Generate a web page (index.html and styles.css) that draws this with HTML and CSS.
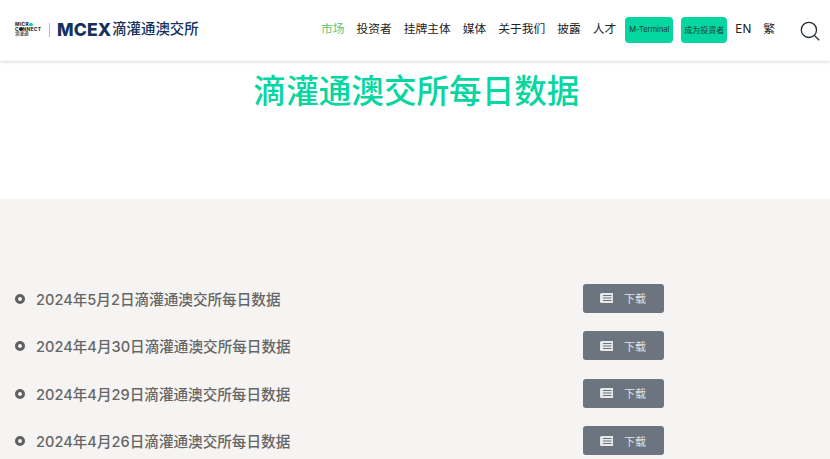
FILE: index.html
```html
<!DOCTYPE html>
<html lang="zh-CN">
<head>
<meta charset="utf-8">
<title>滴灌通澳交所每日数据</title>
<link rel="stylesheet" href="styles.css">
</head>
<body>
<header class="header">
  <a class="logo" href="#">
    <span class="mc">
      <span class="mc-line">MICR<i class="dot"></i></span>
      <span class="mc-line">C<i class="dot dark"></i>NNECT</span>
      <span class="mc-cn">滴灌通</span>
    </span>
    <span class="divider"></span>
    <span class="mcex">MCEX</span>
    <span class="mcex-cn">滴灌通澳交所</span>
  </a>
  <nav class="nav">
    <a class="nav-link active" href="#">市场</a>
    <a class="nav-link" href="#">投资者</a>
    <a class="nav-link" href="#">挂牌主体</a>
    <a class="nav-link" href="#">媒体</a>
    <a class="nav-link" href="#">关于我们</a>
    <a class="nav-link" href="#">披露</a>
    <a class="nav-link" href="#">人才</a>
    <a class="pill pill-a" href="#">M-Terminal</a>
    <a class="pill pill-b" href="#">成为投资者</a>
    <a class="nav-link" href="#">EN</a>
    <a class="nav-link" href="#">繁</a>
  </nav>
  <svg class="search" viewBox="0 0 20 20" width="20" height="20" fill="none" stroke="#222b33" stroke-width="1.3">
    <circle cx="8.9" cy="8.9" r="7.6"/>
    <path d="M14.4 14.4 L19.2 19.2"/>
  </svg>
</header>
<section class="hero">
  <h1 class="title">滴灌通澳交所每日数据</h1>
</section>
<main class="list">
  <div class="row">
    <span class="bullet"></span><span class="name">2024年5月2日滴灌通澳交所每日数据</span>
    <a class="btn" href="#"><svg class="doc" viewBox="0 0 13 10" width="13" height="10"><path class="doc-fill" d="M1.5 0H13V10H1.5Q0 10 0 8.5V1.5Q0 0 1.5 0Z"/><path class="doc-line" d="M3 2.5H11.5M3 5H11.5M3 7.5H11.5"/></svg><span>下载</span></a>
  </div>
  <div class="row">
    <span class="bullet"></span><span class="name">2024年4月30日滴灌通澳交所每日数据</span>
    <a class="btn" href="#"><svg class="doc" viewBox="0 0 13 10" width="13" height="10"><path class="doc-fill" d="M1.5 0H13V10H1.5Q0 10 0 8.5V1.5Q0 0 1.5 0Z"/><path class="doc-line" d="M3 2.5H11.5M3 5H11.5M3 7.5H11.5"/></svg><span>下载</span></a>
  </div>
  <div class="row">
    <span class="bullet"></span><span class="name">2024年4月29日滴灌通澳交所每日数据</span>
    <a class="btn" href="#"><svg class="doc" viewBox="0 0 13 10" width="13" height="10"><path class="doc-fill" d="M1.5 0H13V10H1.5Q0 10 0 8.5V1.5Q0 0 1.5 0Z"/><path class="doc-line" d="M3 2.5H11.5M3 5H11.5M3 7.5H11.5"/></svg><span>下载</span></a>
  </div>
  <div class="row">
    <span class="bullet"></span><span class="name">2024年4月26日滴灌通澳交所每日数据</span>
    <a class="btn" href="#"><svg class="doc" viewBox="0 0 13 10" width="13" height="10"><path class="doc-fill" d="M1.5 0H13V10H1.5Q0 10 0 8.5V1.5Q0 0 1.5 0Z"/><path class="doc-line" d="M3 2.5H11.5M3 5H11.5M3 7.5H11.5"/></svg><span>下载</span></a>
  </div>
</main>
</body>
</html>
```
FILE: styles.css
```css
* { box-sizing: border-box; }
html, body { margin: 0; height: 459px; overflow: hidden; }
body {
  background: #fff;
  font-family: Inter, "Noto Sans CJK SC", sans-serif;
  color: #222;
}
a { color: inherit; text-decoration: none; }

.header {
  position: relative;
  z-index: 1;
  height: 61px;
  display: flex;
  align-items: center;
  padding: 0 10px 2px 15px;
  background: #fff;
  box-shadow: 0 1px 3px rgba(0, 0, 0, .16);
}
.logo { display: flex; align-items: center; color: #17375e; }
.mc { display: flex; flex-direction: column; width: 29px; color: #333; font-weight: 800; line-height: 4.6px; font-size: 4.8px; }
.mc-line { display: flex; align-items: center; white-space: nowrap; letter-spacing: .35px; }
.mc-cn { font-size: 4.5px; line-height: 5.5px; font-weight: 500; }
.dot { width: 3.6px; height: 3.6px; border-radius: 50%; background: #06d6a0; display: inline-block; }
.dot.dark { background: #222; }
.divider { width: 1px; height: 14px; margin: 0 7px 0 5px; background: #b5b8bc; }
.mcex { font-size: 17.6px; font-weight: 800; letter-spacing: .1px; color: #14325c; line-height: 1; }
.mcex-cn { margin-left: 1px; font-size: 14.4px; font-weight: 500; line-height: 1; color: #14325c; }

.nav { margin-left: auto; display: flex; align-items: center; gap: 12px; font-size: 11.75px; }
.nav-link { color: #222; white-space: nowrap; line-height: 1; padding-top: 1px; }
.nav-link.active { color: #5cc26d; }
.pill {
  height: 26px;
  display: flex;
  align-items: center;
  justify-content: center;
  border-radius: 4px;
  background: #06d6a0;
  color: #1c3a3a;
  white-space: nowrap;
}
.pill-a { width: 48px; font-size: 7.5px; margin-left: -3px; margin-right: -4px; }
.pill-b { width: 46px; font-size: 8px; margin-right: -4px; }
.search { margin-left: 25px; margin-top: 2px; flex: none; }

.hero { height: 138px; display: flex; justify-content: center; padding-left: 3px; }
.title {
  margin: 10px 0 0;
  font-size: 32.6px;
  line-height: 40px;
  font-weight: 500;
  color: #06d6a0;
}

.list { height: 260px; padding-top: 75.5px; background: #f5f4f2; }
.row {
  height: 47.5px;
  display: grid;
  grid-template-columns: 10px 558px 81px;
  align-items: center;
  padding-left: 15px;
}
.bullet {
  width: 10px;
  height: 10px;
  margin-top: 1px;
  border-radius: 50%;
  border: 3.5px solid #5f5f5f;
  background: #f5f4f2;
}
.name { margin-left: 11px; font-size: 14.6px; font-weight: 500; color: #666; white-space: nowrap; }
.btn {
  height: 29px;
  display: flex;
  align-items: center;
  gap: 11px;
  padding-left: 17px;
  border-radius: 3px;
  background: #6c7480;
  color: #dfe1e4;
  font-size: 11px;
}
.doc-fill { fill: #e6e8ea; }
.doc-line { stroke: #6c7480; stroke-width: 1; fill: none; }
```
